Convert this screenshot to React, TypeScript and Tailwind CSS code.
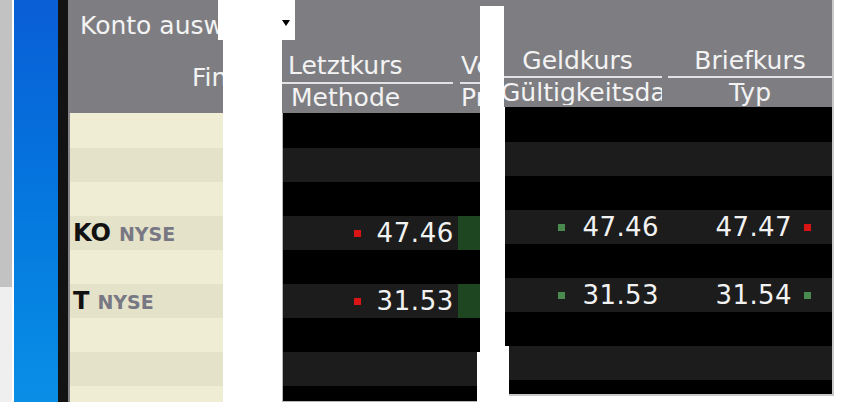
import React from "react"

const aRows = [35, 34, 34, 34, 34, 34, 34, 34, 16]
const bRows = [35, 34, 34, 34, 34, 34, 34, 34, 16]
const cRows = [35, 34, 34, 34, 34, 34, 34, 34, 16]

function Square({ red }: { red?: boolean }) {
  return <span className={`inline-block shrink-0 w-[7px] h-[7px] ${red ? "bg-[#d81414]" : "bg-[#4a8a4e]"}`} />
}

function LeftPanel() {
  return (
    <div className="w-[155px] shrink-0 h-[402px] flex flex-col bg-[#7e7e82] overflow-hidden">
      <div className="h-[113px] flex flex-col text-[#f3f3f3] text-[25px] whitespace-nowrap">
        <div className="h-[48px] pl-[12px] flex items-center pt-[2px]">Konto auswählen</div>
        <div className="h-[64px] pl-[124px] flex items-center pb-[6px]">Finanzinstrument</div>
      </div>
      <div className="flex-1 flex flex-col border-l-2 border-[#86868a]">
        {aRows.map((h, i) => (
          <div
            key={i}
            style={{ height: h }}
            className={`flex items-center pl-[3px] font-bold whitespace-nowrap ${i % 2 === 1 ? "bg-[#e4e2c8]" : "bg-[#efedd4]"}`}
          >
            {i === 3 && (
              <>
                <span className="text-[24px] text-[#111]">KO</span>
                <span className="ml-[8px] text-[19px] text-[#787884] pt-[3px]">NYSE</span>
              </>
            )}
            {i === 5 && (
              <>
                <span className="text-[24px] text-[#111]">T</span>
                <span className="ml-[8px] text-[19px] text-[#787884] pt-[3px]">NYSE</span>
              </>
            )}
          </div>
        ))}
      </div>
    </div>
  )
}

function MiddlePanel() {
  return (
    <div className="w-[198px] shrink-0 h-[402px] flex flex-col overflow-hidden">
      <div className="h-[113px] bg-[#7e7e82] flex flex-col justify-end text-[#f3f3f3] text-[25px] whitespace-nowrap">
        <div className="h-[34px] flex items-center">
          <div className="w-[171px] shrink-0 pl-[6px]">Letztkurs</div>
          <div className="ml-[7px] pl-[1px] min-w-0 overflow-hidden">Verkauf</div>
        </div>
        <div className="h-[2px] flex">
          <div className="w-[171px] shrink-0 bg-[#e2e2e2]" />
          <div className="ml-[7px] flex-1 bg-[#e2e2e2]" />
        </div>
        <div className="h-[29px] flex items-center pb-[2px]">
          <div className="w-[171px] shrink-0 pl-[9px]">Methode</div>
          <div className="ml-[7px] pl-[1px] min-w-0 overflow-hidden">Preis</div>
        </div>
      </div>
      <div className="flex-1 flex flex-col border-l border-[#b8b8b8]">
        {bRows.map((h, i) => (
          <div
            key={i}
            style={{ height: h }}
            className={`flex text-[26px] tracking-[0.6px] text-[#f2f2f2] ${i >= 7 ? "mr-[3px]" : ""} ${i === 8 ? "border-b border-[#b8b8b8]" : ""} ${i % 2 === 1 ? "bg-[#1c1c1c]" : "bg-black"}`}
          >
            <div className="w-[175px] shrink-0 flex items-center justify-end gap-[16px] pr-[4px]">
              {i === 3 && (
                <>
                  <Square red />
                  <span>47.46</span>
                </>
              )}
              {i === 5 && (
                <>
                  <Square red />
                  <span>31.53</span>
                </>
              )}
            </div>
            {(i === 3 || i === 5) && <div className="flex-1 bg-[#1e4620]" />}
          </div>
        ))}
      </div>
    </div>
  )
}

function RightPanel() {
  return (
    <div className="w-[330px] shrink-0 h-[397px] flex flex-col overflow-hidden">
      <div className="h-[107px] bg-[#7e7e82] border-r-2 border-[#c9c9c9] flex flex-col justify-end text-[#f3f3f3] text-[25px] whitespace-nowrap">
        <div className="h-[34px] flex items-center pt-[2px]">
          <div className="w-[158px] shrink-0 text-center pr-[11px]">Geldkurs</div>
          <div className="ml-[6px] flex-1 text-center">Briefkurs</div>
        </div>
        <div className="h-[2px] flex">
          <div className="w-[158px] shrink-0 bg-[#e2e2e2]" />
          <div className="ml-[6px] flex-1 bg-[#e2e2e2]" />
        </div>
        <div className="h-[29px] flex items-center pb-[1px]">
          <div className="w-[158px] shrink-0 overflow-hidden">
            <span className="block ml-[-3px]">Gültigkeitsdatum</span>
          </div>
          <div className="ml-[6px] flex-1 text-center">Typ</div>
        </div>
      </div>
      <div className="flex-1 flex flex-col">
        {cRows.map((h, i) => (
          <div
            key={i}
            style={{ height: h }}
            className={`flex text-[26px] tracking-[0.4px] text-[#f2f2f2] border-r-2 border-[#c9c9c9] ${i >= 7 ? "ml-[5px]" : "ml-[1px]"} ${i === 8 ? "border-b-2" : ""} ${i % 2 === 1 ? "bg-[#1c1c1c]" : "bg-black"}`}
          >
            <div className={`${i >= 7 ? "w-[153px]" : "w-[157px]"} shrink-0 flex items-center justify-end gap-[18px] pr-[3px]`}>
              {i === 3 && (
                <>
                  <Square />
                  <span>47.46</span>
                </>
              )}
              {i === 5 && (
                <>
                  <Square />
                  <span>31.53</span>
                </>
              )}
            </div>
            <div className="ml-[6px] flex-1 flex items-center justify-end gap-[12px] pr-[21px]">
              {i === 3 && (
                <>
                  <span>47.47</span>
                  <Square red />
                </>
              )}
              {i === 5 && (
                <>
                  <span>31.54</span>
                  <Square />
                </>
              )}
            </div>
          </div>
        ))}
      </div>
    </div>
  )
}

export default function App() {
  return (
    <div className="relative w-[852px] h-[416px] bg-white overflow-hidden flex font-['DejaVu_Sans',Verdana,sans-serif] leading-none">
      {/* side strips */}
      <div className="w-[12px] shrink-0 h-[402px] flex flex-col">
        <div className="h-[287px] bg-[#c2c2c2]" />
        <div className="flex-1 bg-[#efefef]" />
      </div>
      <div className="w-[2px] shrink-0" />
      <div className="w-[44px] shrink-0 h-[402px] bg-gradient-to-b from-[#0a5ed6] to-[#0a8fe6]" />
      <div className="w-[10px] shrink-0 h-[402px] bg-[#131313]" />

      <LeftPanel />
      <div className="w-[59px] shrink-0" />
      <MiddlePanel />
      <div className="w-[24px] shrink-0 flex flex-col">
        <div className="h-[6px] bg-[#7e7e82]" />
      </div>
      <RightPanel />

      {/* account dropdown box */}
      <div className="absolute left-[218px] top-0 w-[77px] h-[40px] bg-white">
        <svg className="absolute left-[64px] top-[20px]" width="8" height="6" viewBox="0 0 8 6">
          <path d="M0 0H8L4 6Z" fill="#000" />
        </svg>
      </div>
    </div>
  )
}
